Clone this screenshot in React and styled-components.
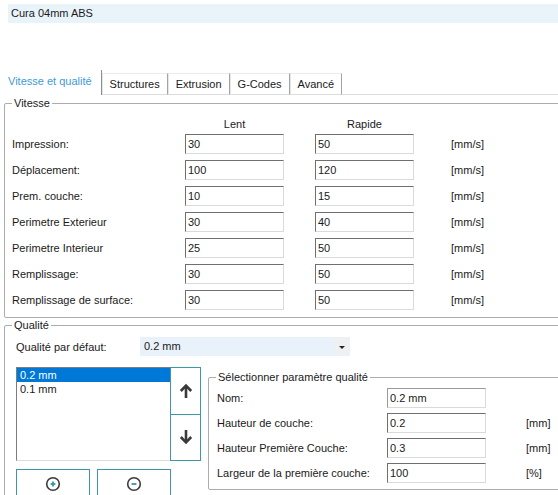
import React from "react";
import styled, { createGlobalStyle } from "styled-components";

const Global = createGlobalStyle`
  html, body { margin: 0; padding: 0; background: #fff; }
  body { font-family: "Liberation Sans", Arial, sans-serif; font-size: 11px; color: #1a1a1a; }
  * { box-sizing: border-box; }
`;

const Root = styled.div`
  width: 558px;
  height: 495px;
  overflow: hidden;
  display: flex;
  flex-direction: column;
`;

const TitleBar = styled.div`
  margin: 4px 0 0 8px;
  height: 19px;
  line-height: 19px;
  padding-left: 3px;
  background: #e9f3fa;
`;

const TabStrip = styled.div`
  margin-top: 47px;
  height: 25px;
  display: flex;
  align-items: flex-end;
`;

const Tab = styled.div`
  display: flex;
  align-items: center;
  padding: ${(p) => (p.$active ? "0 9px 3px 8px" : "0 7px")};
  height: ${(p) => (p.$active ? "25px" : "22px")};
  color: ${(p) => (p.$active ? "#3d9bd8" : "#1a1a1a")};
  background: #fff;
  border-right: 1px solid ${(p) => (p.$active ? "#8e8e8e" : "#a3a3a3")};
  border-top: ${(p) => (p.$active ? "none" : "1px solid #ececec")};
  border-left: ${(p) => (p.$active ? "none" : "1px solid #e6e6e6")};
  border-bottom: ${(p) => (p.$active ? "none" : "1px solid #dcdcdc")};
  white-space: nowrap;
`;

const TabFiller = styled.div`
  flex: 1;
  height: 1px;
  border-bottom: 1px solid #dcdcdc;
`;

const Panel = styled.div`
  display: flex;
  flex-direction: column;
  padding-left: 4px;
  width: 620px;
`;

const GroupBox = styled.fieldset`
  margin: ${(p) => p.$margin || "0"};
  padding: 0;
  min-width: 0;
  border: 1px solid #acacac;
  border-radius: 2px;
  ${(p) => p.$flex && "flex: 1;"}
`;

const Legend = styled.legend`
  margin-left: 7px;
  padding: 0 2px;
  line-height: ${(p) => p.$lh || 12}px;
  color: #1a1a1a;
`;

const SpeedGrid = styled.div`
  display: grid;
  grid-template-columns: 173px 130px 136px auto;
  grid-auto-rows: 26px;
  grid-template-rows: 14px;
  align-items: center;
  padding: 7px 0 4px 7px;
`;

const ColHeader = styled.div`
  width: 99px;
  text-align: center;
  align-self: start;
  line-height: 14px;
`;

const FieldLabel = styled.div`
  white-space: nowrap;
`;

const TextBox = styled.div`
  width: 99px;
  height: 20px;
  line-height: 18px;
  padding-left: 2px;
  background: #fff;
  border-top: 1px solid ${(p) => (p.$soft ? "#9a9a9a" : "#6f6f6f")};
  border-left: 1px solid ${(p) => (p.$soft ? "#9a9a9a" : "#6f6f6f")};
  border-right: 1px solid #dadada;
  border-bottom: 1px solid #dadada;
`;

const Unit = styled.div`
  white-space: nowrap;
`;

const QualityBody = styled.div`
  padding: 6px 0 0 11px;
  display: flex;
  flex-direction: column;
`;

const DefaultRow = styled.div`
  display: flex;
  align-items: center;
  height: 19px;
`;

const DefaultLabel = styled.div`
  width: 124px;
`;

const Combo = styled.div`
  width: 210px;
  height: 19px;
  display: flex;
  background: #e9f2fa;
`;

const ComboValue = styled.div`
  flex: 1;
  line-height: 19px;
  padding-left: 4px;
`;

const ComboArrow = styled.div`
  width: 17px;
  display: flex;
  align-items: center;
  justify-content: center;
  background: #eef1f4;
  &::after {
    content: "";
    border-left: 3px solid transparent;
    border-right: 3px solid transparent;
    border-top: 3px solid #222;
    margin-top: 1px;
  }
`;

const LowerRow = styled.div`
  display: flex;
  align-items: flex-start;
  margin-top: 11px;
`;

const LeftColumn = styled.div`
  width: 185px;
  display: flex;
  flex-direction: column;
`;

const ListRow = styled.div`
  display: flex;
  height: 94px;
`;

const ListBox = styled.div`
  width: 155px;
  height: 94px;
  border-top: 1px solid #7d7d7d;
  border-left: 1px solid #7d7d7d;
  border-bottom: 1px solid #dcdcdc;
  background: #fff;
`;

const ListItem = styled.div`
  height: 14px;
  line-height: 14px;
  padding-left: 3px;
  background: ${(p) => (p.$selected ? "#0078d7" : "transparent")};
  color: ${(p) => (p.$selected ? "#fff" : "#1a1a1a")};
`;

const MoveButtons = styled.div`
  width: 31px;
  display: flex;
  flex-direction: column;
`;

const MoveButton = styled.div`
  flex: 1;
  display: flex;
  align-items: center;
  justify-content: center;
  border: 1px solid #3c98a4;
  background: #fff;
  & + & { border-top: none; }
`;

const ActionRow = styled.div`
  display: flex;
  gap: 7px;
  margin-top: 8px;
`;

const ActionButton = styled.div`
  width: 74px;
  height: 30px;
  display: flex;
  align-items: center;
  justify-content: center;
  border: 1px solid #3c98a4;
  background: #fff;
`;

const ParamGrid = styled.div`
  display: grid;
  grid-template-columns: 170px 139px auto;
  grid-auto-rows: 25px;
  align-items: center;
  padding: 2px 0 4px 8px;
`;

const Arrow = ({ down }) => (
  <svg width="14" height="16" viewBox="0 0 14 16" style={{ transform: down ? "rotate(180deg)" : "none" }}>
    <path d="M7 15V3" stroke="#3a3a3a" strokeWidth="2.6" fill="none" />
    <path d="M1.8 8L7 2.6L12.2 8" stroke="#3a3a3a" strokeWidth="2.6" fill="none" strokeLinejoin="miter" />
  </svg>
);

const CircleIcon = ({ plus }) => (
  <svg width="16" height="16" viewBox="0 0 16 16">
    <circle cx="8" cy="8" r="6.3" stroke="#3a3a3a" strokeWidth="1.6" fill="none" />
    <path d="M5.6 8H10.4" stroke="#2e9aa8" strokeWidth="1.8" />
    {plus && <path d="M8 5.6V10.4" stroke="#2e9aa8" strokeWidth="1.8" />}
  </svg>
);

const speedRows = [
  ["Impression:", "30", "50"],
  ["Déplacement:", "100", "120"],
  ["Prem. couche:", "10", "15"],
  ["Perimetre Exterieur", "30", "40"],
  ["Perimetre Interieur", "25", "50"],
  ["Remplissage:", "30", "50"],
  ["Remplissage de surface:", "30", "50"],
];

const paramRows = [
  ["Nom:", "0.2 mm", "", true],
  ["Hauteur de couche:", "0.2", "[mm]"],
  ["Hauteur Première Couche:", "0.3", "[mm]"],
  ["Largeur de la première couche:", "100", "[%]"],
];

const tabs = ["Vitesse et qualité", "Structures", "Extrusion", "G-Codes", "Avancé"];

export default function App() {
  return (
    <>
      <Global />
      <Root>
        <TitleBar>Cura 04mm ABS</TitleBar>
        <TabStrip>
          {tabs.map((t, i) => (
            <Tab key={t} $active={i === 0}>{t}</Tab>
          ))}
          <TabFiller />
        </TabStrip>
        <Panel>
          <GroupBox $margin="1px 0 0 0">
            <Legend $lh={14}>Vitesse</Legend>
            <SpeedGrid>
              <div />
              <ColHeader>Lent</ColHeader>
              <ColHeader>Rapide</ColHeader>
              <div />
              {speedRows.map(([label, a, b]) => (
                <React.Fragment key={label}>
                  <FieldLabel>{label}</FieldLabel>
                  <TextBox>{a}</TextBox>
                  <TextBox>{b}</TextBox>
                  <Unit>[mm/s]</Unit>
                </React.Fragment>
              ))}
            </SpeedGrid>
          </GroupBox>
          <GroupBox $margin="1px 0 0 0">
            <Legend>Qualité</Legend>
            <QualityBody>
              <DefaultRow>
                <DefaultLabel>Qualité par défaut:</DefaultLabel>
                <Combo>
                  <ComboValue>0.2 mm</ComboValue>
                  <ComboArrow />
                </Combo>
              </DefaultRow>
              <LowerRow>
                <LeftColumn>
                  <ListRow>
                    <ListBox>
                      <ListItem $selected>0.2 mm</ListItem>
                      <ListItem>0.1 mm</ListItem>
                    </ListBox>
                    <MoveButtons>
                      <MoveButton><Arrow /></MoveButton>
                      <MoveButton><Arrow down /></MoveButton>
                    </MoveButtons>
                  </ListRow>
                  <ActionRow>
                    <ActionButton><CircleIcon plus /></ActionButton>
                    <ActionButton><CircleIcon /></ActionButton>
                  </ActionRow>
                </LeftColumn>
                <GroupBox $margin="4px 0 0 7px" $flex>
                  <Legend>Sélectionner paramètre qualité</Legend>
                  <ParamGrid>
                    {paramRows.map(([label, v, unit, soft]) => (
                      <React.Fragment key={label}>
                        <FieldLabel>{label}</FieldLabel>
                        <TextBox $soft={soft}>{v}</TextBox>
                        <Unit>{unit}</Unit>
                      </React.Fragment>
                    ))}
                  </ParamGrid>
                </GroupBox>
              </LowerRow>
            </QualityBody>
          </GroupBox>
        </Panel>
      </Root>
    </>
  );
}
